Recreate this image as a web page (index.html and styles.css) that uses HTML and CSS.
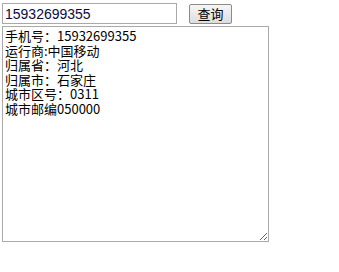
FILE: index.html
```html
<!doctype html>
<html>
<head>
<meta charset="utf-8">
<title>手机号码归属地查询</title>
<link rel="stylesheet" href="styles.css">
</head>
<body>
<div class="query">
<input type="text" class="phone" value="15932699355">
<input type="button" class="btn" value="查询">
</div>
<textarea class="result">手机号：15932699355
运行商:中国移动
归属省：河北
归属市：石家庄
城市区号：0311
城市邮编050000</textarea>
</body>
</html>
```

FILE: styles.css
```css
body {
	margin: 0;
	padding: 3px 2px;
	background: #fff;
}
.query {
	display: flex;
	align-items: center;
	height: 21px;
}
.phone {
	box-sizing: border-box;
	width: 175px;
	height: 21px;
	margin: 0;
	padding: 0 2px;
	border: 1px solid #a9a9a9;
	font-family: "Liberation Sans", Arial, sans-serif;
	font-size: 14px;
	color: #0a0a3c;
	outline: none;
}
.btn {
	box-sizing: border-box;
	width: 43px;
	height: 20px;
	margin: 0 0 0 12px;
	padding: 0;
	border: 1px solid #8a8a8a;
	background: linear-gradient(to bottom, #f6f6f6 0, #dddddd 100%);
	font-family: "Noto Sans CJK SC", sans-serif;
	font-size: 13px;
	line-height: 18px;
	color: #000;
	border-radius: 2px;
}
.result {
	display: block;
	box-sizing: border-box;
	width: 267px;
	height: 216px;
	margin: 2px 0 0 0;
	padding: 2px 2px;
	border: 1px solid #a9a9a9;
	font-family: "Noto Sans CJK SC", sans-serif;
	font-size: 13px;
	line-height: 14.5px;
	color: #000;
	resize: both;
	outline: none;
}
```
